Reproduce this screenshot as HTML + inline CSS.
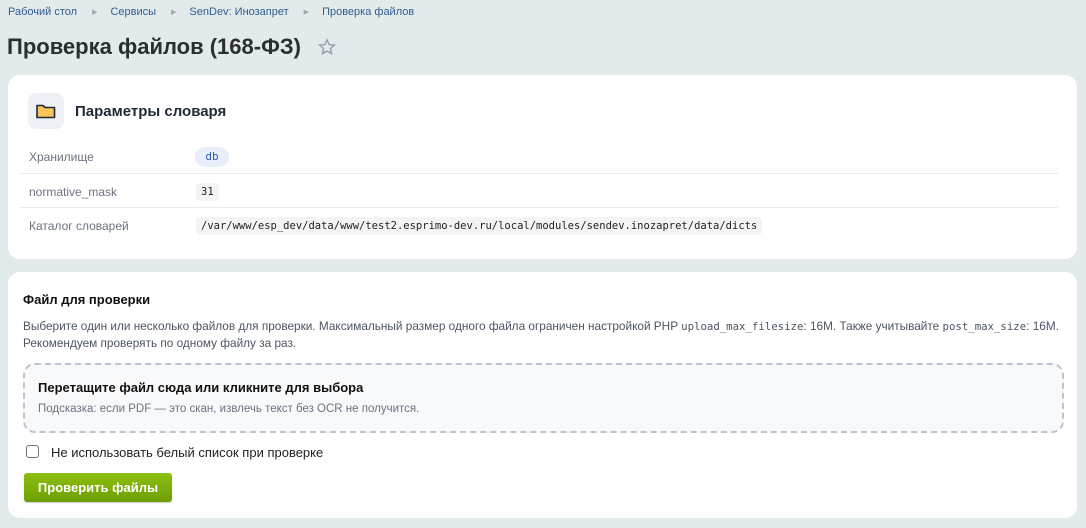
<!DOCTYPE html>
<html><head><meta charset="utf-8"><style>
*{box-sizing:border-box;margin:0;padding:0}
body{width:1086px;height:528px;background:#e3eaec;font-family:"Liberation Sans","DejaVu Sans",sans-serif;position:relative;overflow:hidden;color:#1f2937}
.abs{position:absolute;white-space:nowrap}
.bc{top:6px;left:8px;font-size:11px;color:#2f5d91}
.bc .ar{color:#a0aab4;font-size:7px;margin:0 13px 0 15px;position:relative;top:-1px}
.card{position:absolute;background:#fff;border-radius:12px}
.lbl{font-size:12px;color:#6b7280;left:29px}
.sep{position:absolute;left:19px;width:1039px;height:1px;background:#e8ebef}
.mono{font-family:"DejaVu Sans Mono","Liberation Mono",monospace;font-size:10.5px;color:#222;background:#f3f4f6;border-radius:4px;padding:3px 5px}
</style></head><body>
<div class="abs bc"><span>Рабочий стол</span><span class="ar">▶</span><span>Сервисы</span><span class="ar">▶</span><span>SenDev: Инозапрет</span><span class="ar">▶</span><span>Проверка файлов</span></div>
<div class="abs" style="top:34px;left:7px;font-size:22px;font-weight:bold;color:#2a2e33">Проверка файлов (168-ФЗ)</div>
<svg class="abs" style="left:318px;top:38px" width="18" height="18" viewBox="0 0 24 24"><path d="M12 2.5l2.9 6.3 6.8.7-5.1 4.6 1.5 6.8L12 17.4l-6.1 3.5 1.5-6.8-5.1-4.6 6.8-.7z" fill="none" stroke="#9aa3ab" stroke-width="2"/></svg>

<div class="card" style="left:8px;top:75px;width:1069px;height:184px"></div>
<div class="abs" style="left:28px;top:93px;width:36px;height:36px;border-radius:8px;background:#edf1f6"></div>
<svg class="abs" style="left:36px;top:103px" width="20" height="16" viewBox="0 0 20 16"><path d="M1 2.5h6l2 2h9.5v10H1z" fill="#f7c55a" stroke="#1f2937" stroke-width="1.6" stroke-linejoin="round"/></svg>
<div class="abs" style="left:75px;top:103px;font-size:15px;font-weight:bold;color:#1f2937">Параметры словаря</div>
<div class="abs lbl" style="top:150px">Хранилище</div>
<div class="abs" style="left:195px;top:147px;width:34px;height:20px;border-radius:10px;background:#e8effa;color:#2d5ba8;font-family:'DejaVu Sans Mono',monospace;font-size:11px;text-align:center;line-height:20px">db</div>
<div class="sep" style="top:173px"></div>
<div class="abs lbl" style="top:185px">normative_mask</div>
<div class="abs mono" style="left:196px;top:183px">31</div>
<div class="sep" style="top:207px"></div>
<div class="abs lbl" style="top:219px">Каталог словарей</div>
<div class="abs mono" style="left:196px;top:217px">/var/www/esp_dev/data/www/test2.esprimo-dev.ru/local/modules/sendev.inozapret/data/dicts</div>

<div class="card" style="left:8px;top:272px;width:1069px;height:246px"></div>
<div class="abs" style="left:23px;top:292px;font-size:13px;font-weight:bold;color:#111">Файл для проверки</div>
<div class="abs" style="left:23px;top:318px;font-size:11.8px;color:#4b5563;line-height:17px">Выберите один или несколько файлов для проверки. Максимальный размер одного файла ограничен настройкой PHP <span style="font-family:'DejaVu Sans Mono',monospace;font-size:10.7px">upload_max_filesize</span>: 16M. Также учитывайте <span style="font-family:'DejaVu Sans Mono',monospace;font-size:10.7px">post_max_size</span>: 16M.<br>Рекомендуем проверять по одному файлу за раз.</div>
<div class="abs" style="left:23px;top:363px;width:1041px;height:70px;border:2px dashed #bcc4d0;border-radius:12px;background:#f8f9fb"></div>
<div class="abs" style="left:38px;top:380px;font-size:13px;font-weight:bold;color:#111">Перетащите файл сюда или кликните для выбора</div>
<div class="abs" style="left:38px;top:403px;font-size:11.5px;color:#6b7280">Подсказка: если PDF — это скан, извлечь текст без OCR не получится.</div>
<div class="abs" style="left:26px;top:445px;width:13px;height:13px;border:1px solid #6b7280;border-radius:3px;background:#fff"></div>
<div class="abs" style="left:51px;top:445px;font-size:13px;color:#222">Не использовать белый список при проверке</div>
<div class="abs" style="left:24px;top:473px;width:148px;height:29px;border-radius:3px;background:linear-gradient(#8cbf0f,#6d9f04);box-shadow:0 1px 1px rgba(0,0,0,.2);color:#fff;font-size:13px;font-weight:bold;text-align:center;line-height:29px">Проверить файлы</div>
</body></html>
